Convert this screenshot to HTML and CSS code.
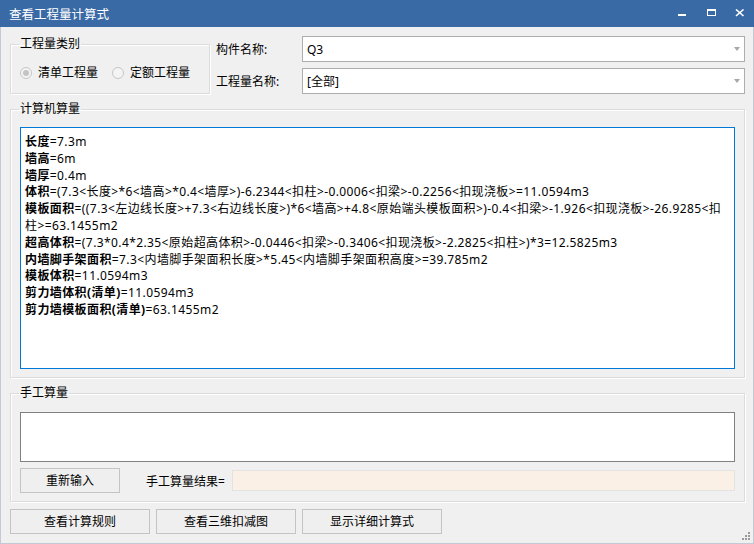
FILE: index.html
```html
<!DOCTYPE html>
<html lang="zh-CN">
<head>
<meta charset="utf-8">
<title>查看工程量计算式</title>
<link rel="stylesheet" href="styles.css">
</head>
<body>
<div class="window">
  <div class="titlebar">
    <span class="title">查看工程量计算式</span>
    <div class="winbtns">
      <svg class="wb" width="10" height="10" viewBox="0 0 10 10"><rect x="1" y="5" width="8" height="2" fill="#fff"/></svg>
      <svg class="wb" width="10" height="10" viewBox="0 0 10 10"><rect x="1.5" y="0.5" width="8" height="6" fill="none" stroke="#fff"/><rect x="1" y="0" width="9" height="2" fill="#fff"/></svg>
      <svg class="wb" width="10" height="10" viewBox="0 0 10 10"><path d="M1 0.5 L8.5 7 M8.5 0.5 L1 7" stroke="#fff" stroke-width="1.6"/></svg>
    </div>
  </div>
  <div class="content">
    <div class="toprow">
      <fieldset class="group kind">
        <legend>工程量类别</legend>
        <div class="radios">
          <label class="radio"><span class="dot checked"></span>清单工程量</label>
          <label class="radio"><span class="dot"></span>定额工程量</label>
        </div>
      </fieldset>
      <div class="form">
        <span class="lbl">构件名称:</span>
        <div class="combo"><span>Q3</span><i class="arrow"></i></div>
        <span class="lbl">工程量名称:</span>
        <div class="combo"><span>[全部]</span><i class="arrow"></i></div>
      </div>
    </div>

    <fieldset class="group calc">
      <legend>计算机算量</legend>
      <div class="rich">
        <div><b>长度</b>=7.3m</div>
        <div><b>墙高</b>=6m</div>
        <div><b>墙厚</b>=0.4m</div>
        <div><b>体积</b>=(7.3&lt;长度&gt;*6&lt;墙高&gt;*0.4&lt;墙厚&gt;)-6.2344&lt;扣柱&gt;-0.0006&lt;扣梁&gt;-0.2256&lt;扣现浇板&gt;=11.0594m3</div>
        <div><b>模板面积</b>=((7.3&lt;左边线长度&gt;+7.3&lt;右边线长度&gt;)*6&lt;墙高&gt;+4.8&lt;原始端头模板面积&gt;)-0.4&lt;扣梁&gt;-1.926&lt;扣现浇板&gt;-26.9285&lt;扣<br>柱&gt;=63.1455m2</div>
        <div><b>超高体积</b>=(7.3*0.4*2.35&lt;原始超高体积&gt;-0.0446&lt;扣梁&gt;-0.3406&lt;扣现浇板&gt;-2.2825&lt;扣柱&gt;)*3=12.5825m3</div>
        <div><b>内墙脚手架面积</b>=7.3&lt;内墙脚手架面积长度&gt;*5.45&lt;内墙脚手架面积高度&gt;=39.785m2</div>
        <div><b>模板体积</b>=11.0594m3</div>
        <div><b>剪力墙体积(清单)</b>=11.0594m3</div>
        <div><b>剪力墙模板面积(清单)</b>=63.1455m2</div>
      </div>
    </fieldset>

    <fieldset class="group manual">
      <legend>手工算量</legend>
      <div class="manualbox"></div>
      <div class="resultrow">
        <button class="btn reset">重新输入</button>
        <span class="rlbl">手工算量结果=</span>
        <div class="result"></div>
      </div>
    </fieldset>

    <div class="bottom">
      <button class="btn wide">查看计算规则</button>
      <button class="btn wide">查看三维扣减图</button>
      <button class="btn wide">显示详细计算式</button>
    </div>
  </div>
  <svg class="grip" width="9" height="9" viewBox="0 0 9 9">
    <rect x="6" y="0" width="2" height="2" fill="#9a9a9a"/>
    <rect x="3" y="3" width="2" height="2" fill="#9a9a9a"/>
    <rect x="6" y="3" width="2" height="2" fill="#9a9a9a"/>
    <rect x="0" y="6" width="2" height="2" fill="#9a9a9a"/>
    <rect x="3" y="6" width="2" height="2" fill="#9a9a9a"/>
    <rect x="6" y="6" width="2" height="2" fill="#9a9a9a"/>
  </svg>
</div>
</body>
</html>
```

FILE: styles.css
```css
* { box-sizing: border-box; }
html, body { margin: 0; padding: 0; }
body {
  width: 754px;
  height: 544px;
  overflow: hidden;
  font-family: "Noto Sans", "Noto Sans CJK SC", sans-serif;
  font-size: 12px;
  color: #000;
  background: #f0f0f0;
}
.window {
  position: relative;
  width: 754px;
  height: 544px;
  background: #f0f0f0;
  border-left: 1px solid #c3cad5;
  border-right: 1px solid #c3cad5;
  border-bottom: 1px solid #c3cad5;
}
.titlebar {
  height: 27px;
  margin: 0 -1px;
  background: #396aa5;
  color: #fff;
  display: flex;
  align-items: center;
  padding-left: 9px;
  font-size: 12.5px;
}
.title { flex: 1; padding-bottom: 1px; }
.winbtns {
  display: flex;
  gap: 19px;
  padding-right: 9px;
  padding-top: 1px;
  align-items: center;
}
.wb { display: block; }

.content {
  padding: 9px 8px 0 9px;
  display: flex;
  flex-direction: column;
}

.group {
  margin: 0;
  border: 1px solid #dcdcdc;
  box-shadow: inset 1px 1px 0 #fff, 1px 1px 0 #fff;
  padding: 0 9px 8px 9px;
  min-width: 0;
}
.group legend {
  padding: 0 1px;
  margin-left: -1px;
  line-height: 16px;
  height: 16px;
}

.toprow {
  display: flex;
  height: 58px;
}
.kind {
  width: 200px;
  height: 58px;
  padding: 0 0 0 9px;
}
.radios {
  display: flex;
  gap: 14px;
  padding-top: 13px;
}
.radio {
  display: flex;
  align-items: center;
  gap: 6px;
  line-height: 16px;
}
.dot {
  width: 12px;
  height: 12px;
  border-radius: 50%;
  border: 1px solid #c6c6c6;
  background: #f4f4f4;
  display: flex;
  align-items: center;
  justify-content: center;
}
.dot.checked::after {
  content: "";
  width: 6px;
  height: 6px;
  border-radius: 50%;
  background: #c4c4c4;
}

.form {
  flex: 1;
  margin-left: 6px;
  display: grid;
  grid-template-columns: 86px 1fr;
  grid-template-rows: 26px 26px;
  row-gap: 6px;
  align-items: center;
}
.lbl { line-height: 16px; padding-top: 1px; }
.combo {
  height: 26px;
  border: 1px solid #adadad;
  background: #fff;
  display: flex;
  align-items: center;
  padding: 0 4px;
}
.combo span { flex: 1; }
.arrow {
  width: 0;
  height: 0;
  border-left: 3px solid transparent;
  border-right: 3px solid transparent;
  border-top: 4px solid #a8a8a8;
  margin-right: 0px;
}

.calc {
  margin-top: 7px;
  height: 277px;
  padding-top: 10px;
}
.rich {
  height: 242px;
  border: 1px solid #0078d7;
  background: #fff;
  padding: 6px 4px 4px 4px;
  line-height: 16.8px;
  letter-spacing: 0.4px;
}
.rich div { white-space: nowrap; }
.rich b { font-weight: 700; }

.manual {
  margin-top: 7px;
  height: 117px;
  padding-top: 11px;
}
.manualbox {
  height: 50px;
  border: 1px solid #808080;
  background: #fff;
}
.resultrow {
  display: flex;
  align-items: center;
  margin-top: 6px;
  height: 25px;
}
.btn {
  font-family: inherit;
  font-size: 12px;
  color: #000;
  background: #efefef;
  border: 1px solid #c4c4c4;
  border-radius: 0;
  padding: 0;
  height: 25px;
  line-height: 16px;
}
.reset { width: 100px; }
.rlbl { margin-left: 26px; width: 86px; }
.result {
  flex: 1;
  height: 21px;
  background: #faf0e6;
  border: 1px solid #e3e3e3;
}

.bottom {
  display: flex;
  gap: 6px;
  margin-top: 7px;
}
.wide { width: 140px; }

.grip {
  position: absolute;
  right: 2px;
  bottom: 2px;
}
```
